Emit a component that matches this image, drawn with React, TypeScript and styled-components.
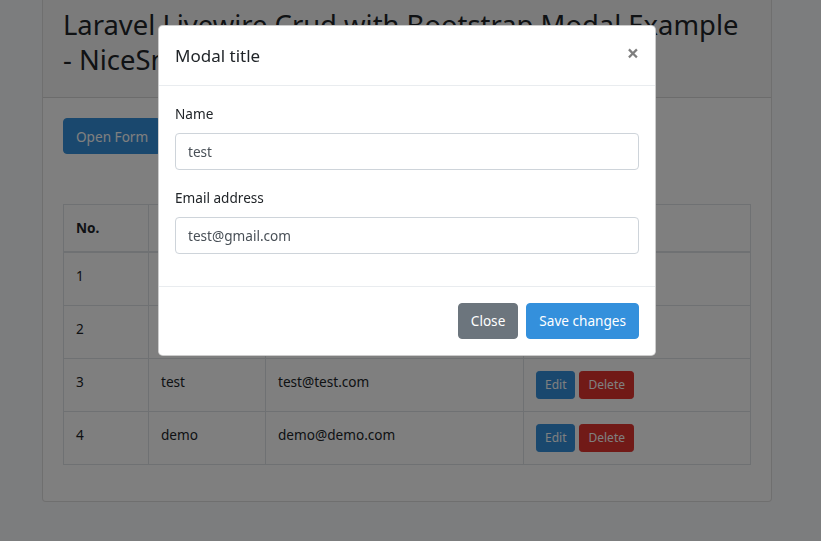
import React from 'react';
import styled, { createGlobalStyle, css } from 'styled-components';

type Variant = 'primary' | 'secondary' | 'danger';

interface User {
  id: number;
  name: string;
  email: string;
}

const users: User[] = [
  { id: 1, name: 'hardik', email: 'hardik@gmail.com' },
  { id: 2, name: 'vimal', email: 'vimal@gmail.com' },
  { id: 3, name: 'test', email: 'test@test.com' },
  { id: 4, name: 'demo', email: 'demo@demo.com' },
];

// Nunito is not installed; Noto Sans at ~0.945x gives similar widths and x-height
const GlobalStyle = createGlobalStyle`
  html, body {
    margin: 0;
    padding: 0;
    height: 100%;
    overflow: hidden;
  }

  body {
    background: #f8fafc;
    color: #212529;
    font-family: 'Noto Sans', 'Open Sans', sans-serif;
    font-size: 13.6px;
    line-height: 23.04px;
  }

  * {
    box-sizing: border-box;
  }
`;

const colors: Record<Variant, string> = {
  primary: '#3490dc',
  secondary: '#6c757d',
  danger: '#e3342f',
};

const Page = styled.div`
  padding-left: 42px;
`;

const Card = styled.div`
  width: 730px;
  margin-top: -5px;
  background: #fff;
  border: 1px solid rgba(0, 0, 0, 0.125);
  border-radius: 4px;
`;

const CardHeader = styled.div`
  padding: 12px 20px;
  background: rgba(0, 0, 0, 0.03);
  border-bottom: 1px solid rgba(0, 0, 0, 0.125);
`;

const Title = styled.h2`
  margin: 0 0 8px;
  font-size: 27.4px;
  font-weight: 400;
  line-height: 34.56px;
`;

const NoWrap = styled.span`
  white-space: nowrap;
`;

const CardBody = styled.div`
  padding: 20px;
`;

const Button = styled.button<{ $variant: Variant; $small?: boolean }>`
  display: inline-block;
  border: 1px solid ${(p) => colors[p.$variant]};
  background: ${(p) => colors[p.$variant]};
  color: #fff;
  font-family: inherit;
  cursor: pointer;
  ${(p) =>
    p.$small
      ? css`
          padding: 4px 8px;
          font-size: 12px;
          line-height: 18px;
          border-radius: 3.2px;
        `
      : css`
          padding: 5.4px 12px;
          font-size: 13.6px;
          line-height: 23.04px;
          border-radius: 4px;
        `}
`;

const Table = styled.table`
  width: 100%;
  margin: 50px 0 16px;
  border-collapse: collapse;
  table-layout: fixed;

  th,
  td {
    padding: 12px;
    border: 1px solid #dee2e6;
    text-align: left;
    vertical-align: top;
    line-height: 22px;
  }

  th {
    font-weight: 700;
    border-bottom-width: 2px;
  }
`;

const Actions = styled.div`
  display: flex;
  gap: 4px;
`;

const Backdrop = styled.div`
  position: fixed;
  inset: 0;
  background: rgba(0, 0, 0, 0.5);
`;

const Modal = styled.div`
  position: fixed;
  top: 25px;
  left: 158px;
  width: 498px;
  background: #fff;
  border: 1px solid rgba(0, 0, 0, 0.2);
  border-radius: 4.8px;
`;

const ModalHeader = styled.div`
  display: flex;
  align-items: flex-start;
  padding: 16px;
  border-bottom: 1px solid #e9ecef;
`;

const ModalTitle = styled.h5`
  margin: 0;
  font-size: 17px;
  font-weight: 400;
  line-height: 27px;
`;

const CloseX = styled.button`
  margin: -16px -16px -16px auto;
  padding: 16px;
  border: 0;
  background: transparent;
  font-family: inherit;
  font-size: 21.6px;
  font-weight: 700;
  line-height: 1;
  color: #000;
  opacity: 0.5;
  text-shadow: 0 1px 0 #fff;
`;

const ModalBody = styled.div`
  padding: 16px;
`;

const FormGroup = styled.div`
  margin-bottom: 16px;
`;

const Label = styled.label`
  display: block;
  margin-bottom: 8px;
`;

const Input = styled.input`
  display: block;
  width: 100%;
  height: 37px;
  padding: 6px 12px;
  border: 1px solid #ced4da;
  border-radius: 4px;
  font-family: inherit;
  font-size: 13.6px;
  line-height: 23.04px;
  color: #495057;
`;

const ModalFooter = styled.div`
  display: flex;
  justify-content: flex-end;
  padding: 12px;
  border-top: 1px solid #e9ecef;

  & > button {
    margin: 4px;
  }
`;

const App = () => {
  return (
    <>
      <GlobalStyle />
      <Page>
        <Card>
          <CardHeader>
            <Title>
              Laravel Livewire Crud with Bootstrap Modal Example <NoWrap>- NiceSnippets.com</NoWrap>
            </Title>
          </CardHeader>
          <CardBody>
            <Button $variant="primary">Open Form</Button>
            <Table>
              <colgroup>
                <col style={{ width: 85 }} />
                <col style={{ width: 117 }} />
                <col style={{ width: 258 }} />
                <col />
              </colgroup>
              <thead>
                <tr>
                  <th>No.</th>
                  <th>Name</th>
                  <th>Email</th>
                  <th>Action</th>
                </tr>
              </thead>
              <tbody>
                {users.map((user) => (
                  <tr key={user.id}>
                    <td>{user.id}</td>
                    <td>{user.name}</td>
                    <td>{user.email}</td>
                    <td>
                      <Actions>
                        <Button $variant="primary" $small>
                          Edit
                        </Button>
                        <Button $variant="danger" $small>
                          Delete
                        </Button>
                      </Actions>
                    </td>
                  </tr>
                ))}
              </tbody>
            </Table>
          </CardBody>
        </Card>
      </Page>

      <Backdrop />
      <Modal>
        <ModalHeader>
          <ModalTitle>Modal title</ModalTitle>
          <CloseX aria-label="Close">×</CloseX>
        </ModalHeader>
        <ModalBody>
          <FormGroup>
            <Label>Name</Label>
            <Input defaultValue="test" />
          </FormGroup>
          <FormGroup>
            <Label>Email address</Label>
            <Input defaultValue="test@gmail.com" />
          </FormGroup>
        </ModalBody>
        <ModalFooter>
          <Button $variant="secondary">Close</Button>
          <Button $variant="primary">Save changes</Button>
        </ModalFooter>
      </Modal>
    </>
  );
};

export default App;
